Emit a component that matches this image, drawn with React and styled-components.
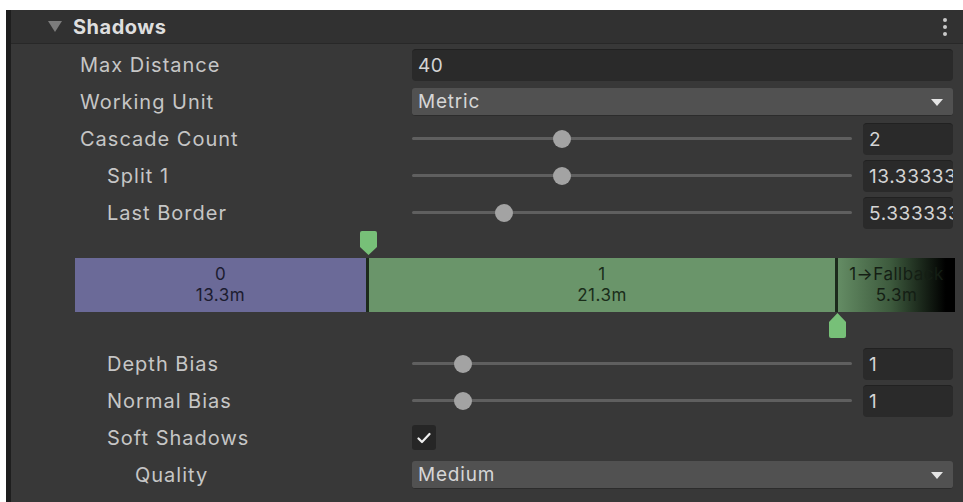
import styled, { createGlobalStyle } from "styled-components";

const GlobalStyle = createGlobalStyle`
    body {
        margin: 0;
        background: #ffffff;
        font-family: Inter, "Noto Sans", sans-serif;
    }
`;

const Page = styled.div`
    padding: 10px 0 0 6px;
`;

const Inspector = styled.div`
    height: 492px;
    background: #383838;
    border-left: 5px solid #1e1e1e;
    overflow: hidden;
`;

const Header = styled.div`
    height: 33px;
    display: flex;
    align-items: center;
    padding-left: 37px;
    padding-right: 16px;
    background: #313131;
    border-bottom: 1px solid #282828;
`;

const Foldout = styled.span`
    width: 0;
    height: 0;
    border-left: 7px solid transparent;
    border-right: 7px solid transparent;
    border-top: 11px solid #7c7c7c;
    margin-right: 11px;
`;

const HeaderTitle = styled.span`
    flex: 1;
    font-size: 20px;
    font-weight: 700;
    color: #dedede;
    letter-spacing: 0.5px;
`;

const Kebab = styled.span`
    display: flex;
    flex-direction: column;
    gap: 3px;
    span {
        width: 4px;
        height: 4px;
        border-radius: 50%;
        background: #c9c9c9;
    }
`;

const Body = styled.div`
    padding-top: 2px;
`;

const Row = styled.div`
    display: grid;
    grid-template-columns: 401px 1fr;
    align-items: center;
    height: 37px;
    padding-right: 10px;
`;

const Label = styled.span`
    padding-left: ${(p) => p.indent}px;
    font-size: 20px;
    color: #c6c6c6;
    letter-spacing: 1px;
    white-space: nowrap;
`;

const TextField = styled.div`
    height: 32px;
    box-sizing: border-box;
    padding: 0 6px;
    display: flex;
    align-items: center;
    background: #2a2a2a;
    border-radius: 4px;
    border-top: 1px solid #212121;
    font-size: 19px;
    letter-spacing: 0.6px;
    color: #d4d4d4;
    overflow: hidden;
    white-space: nowrap;
`;

const Dropdown = styled.div`
    height: 28px;
    box-sizing: border-box;
    padding: 0 10px 0 6px;
    display: flex;
    align-items: center;
    justify-content: space-between;
    background: #515151;
    border-radius: 3px;
    border-bottom: 1px solid #2c2c2c;
    font-size: 19px;
    letter-spacing: 0.8px;
    color: #d6d6d6;
`;

const Arrow = styled.span`
    width: 0;
    height: 0;
    border-left: 6px solid transparent;
    border-right: 6px solid transparent;
    border-top: 7px solid #e4e4e4;
    margin-top: 2px;
`;

const SliderBox = styled.div`
    display: flex;
    align-items: center;
    gap: 11px;
`;

const Track = styled.div`
    position: relative;
    flex: 1;
    height: 3px;
    background: #5f5f5f;
    border-radius: 2px;
`;

const Thumb = styled.span`
    position: absolute;
    top: 50%;
    width: 18px;
    height: 18px;
    margin: -9px 0 0 -9px;
    border-radius: 50%;
    background: #a3a3a3;
`;

const NumberField = styled(TextField)`
    width: 90px;
    flex: none;
`;

const Checkbox = styled.div`
    width: 24px;
    height: 25px;
    border-radius: 3px;
    background: #262626;
    display: flex;
    align-items: center;
    justify-content: center;
`;

const Cascade = styled.div`
    padding: 0 8px 0 64px;
    height: 114px;
    display: flex;
    flex-direction: column;
`;

const MarkerLane = styled.div`
    position: relative;
    height: ${(p) => p.h}px;
`;

const Marker = styled.svg`
    position: absolute;
    width: 17px;
    height: 25px;
`;

const Bar = styled.div`
    display: flex;
    height: 54px;
    background: #1f2a1f;
`;

const Segment = styled.div`
    display: flex;
    flex-direction: column;
    align-items: center;
    justify-content: center;
    background: ${(p) => p.bg};
    color: ${(p) => p.ink};
    font-size: 17px;
    letter-spacing: 0.5px;
    line-height: 21px;
    overflow: hidden;
    white-space: nowrap;
`;

const Sep = styled.div`
    width: 3px;
    background: #1c2a1c;
    flex: none;
`;

const Slider = ({ value, pos }) => (
    <SliderBox>
        <Track>
            <Thumb style={{ left: `${pos}%` }} />
        </Track>
        <NumberField>{value}</NumberField>
    </SliderBox>
);

const App = () => {
    return (
        <Page>
            <GlobalStyle />
            <Inspector>
                <Header>
                    <Foldout />
                    <HeaderTitle>Shadows</HeaderTitle>
                    <Kebab>
                        <span />
                        <span />
                        <span />
                    </Kebab>
                </Header>
                <Body>
                    <Row>
                        <Label indent={69}>Max Distance</Label>
                        <TextField>40</TextField>
                    </Row>
                    <Row>
                        <Label indent={69}>Working Unit</Label>
                        <Dropdown>
                            Metric
                            <Arrow />
                        </Dropdown>
                    </Row>
                    <Row>
                        <Label indent={69}>Cascade Count</Label>
                        <Slider value="2" pos={34} />
                    </Row>
                    <Row>
                        <Label indent={96}>Split 1</Label>
                        <Slider value="13.33333" pos={34} />
                    </Row>
                    <Row>
                        <Label indent={96}>Last Border</Label>
                        <Slider value="5.333333" pos={21} />
                    </Row>
                    <Cascade>
                        <MarkerLane h={27}>
                            <Marker viewBox="0 0 17 25" style={{ left: 285, top: 0 }}>
                                <path d="M2 0 H15 Q17 0 17 2 V16 L8.5 24 L0 16 V2 Q0 0 2 0 Z" fill="#77c078" />
                            </Marker>
                        </MarkerLane>
                        <Bar>
                            <Segment bg="#6b6a98" ink="#1c1c30" style={{ width: 291 }}>
                                <span>0</span>
                                <span>13.3m</span>
                            </Segment>
                            <Sep />
                            <Segment bg="#6a956a" ink="#1a2d1a" style={{ width: 466 }}>
                                <span>1</span>
                                <span>21.3m</span>
                            </Segment>
                            <Sep />
                            <Segment
                                bg="linear-gradient(to right, #648c64 0%, #3d5a3d 45%, #000 92%)"
                                ink="#141e14"
                                style={{ flex: 1 }}
                            >
                                <span>1→Fallback</span>
                                <span>5.3m</span>
                            </Segment>
                        </Bar>
                        <MarkerLane h={33}>
                            <Marker viewBox="0 0 17 25" style={{ left: 754, top: 1 }}>
                                <path d="M8.5 0 L17 9 V23 Q17 25 15 25 H2 Q0 25 0 23 V9 Z" fill="#77c078" />
                            </Marker>
                        </MarkerLane>
                    </Cascade>
                    <Row>
                        <Label indent={96}>Depth Bias</Label>
                        <Slider value="1" pos={11.5} />
                    </Row>
                    <Row>
                        <Label indent={96}>Normal Bias</Label>
                        <Slider value="1" pos={11.5} />
                    </Row>
                    <Row>
                        <Label indent={96}>Soft Shadows</Label>
                        <Checkbox>
                            <svg width="14" height="12" viewBox="0 0 14 12">
                                <path d="M1.5 6.5 L5 10 L12.5 2" stroke="#f0f0f0" strokeWidth="2.2" fill="none" strokeLinecap="round" strokeLinejoin="round" />
                            </svg>
                        </Checkbox>
                    </Row>
                    <Row>
                        <Label indent={124}>Quality</Label>
                        <Dropdown>
                            Medium
                            <Arrow />
                        </Dropdown>
                    </Row>
                </Body>
            </Inspector>
        </Page>
    );
};

export default App;
